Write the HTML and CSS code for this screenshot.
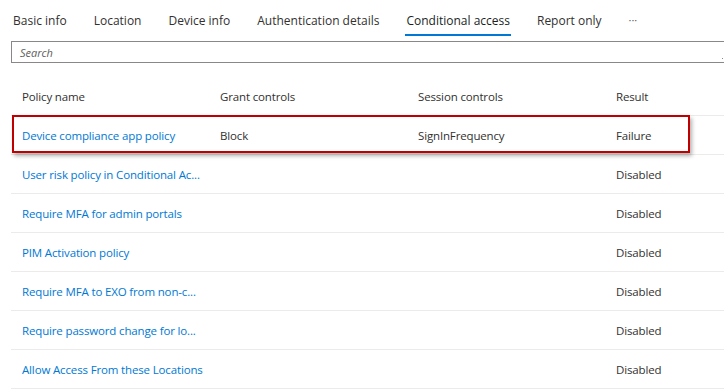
FILE: index.html
```html
<!DOCTYPE html>
<html lang="en">
<head>
<meta charset="utf-8">
<title>Conditional access</title>
<link rel="stylesheet" href="styles.css">
</head>
<body>
<div class="page">
  <nav class="tabs">
    <span class="tab">Basic info</span>
    <span class="tab">Location</span>
    <span class="tab">Device info</span>
    <span class="tab">Authentication details</span>
    <span class="tab active">Conditional access</span>
    <span class="tab">Report only</span>
    <span class="tab more">···</span>
  </nav>
  <div class="search"><span class="placeholder">Search</span><span class="grip"></span></div>
  <div class="table">
    <div class="row head">
      <div class="cell">Policy name</div>
      <div class="cell">Grant controls</div>
      <div class="cell">Session controls</div>
      <div class="cell">Result</div>
    </div>
    <div class="row">
      <div class="cell link">Device compliance app policy</div>
      <div class="cell">Block</div>
      <div class="cell">SignInFrequency</div>
      <div class="cell">Failure</div>
    </div>
    <div class="row">
      <div class="cell link">User risk policy in Conditional Ac...</div>
      <div class="cell"></div>
      <div class="cell"></div>
      <div class="cell">Disabled</div>
    </div>
    <div class="row">
      <div class="cell link">Require MFA for admin portals</div>
      <div class="cell"></div>
      <div class="cell"></div>
      <div class="cell">Disabled</div>
    </div>
    <div class="row">
      <div class="cell link">PIM Activation policy</div>
      <div class="cell"></div>
      <div class="cell"></div>
      <div class="cell">Disabled</div>
    </div>
    <div class="row">
      <div class="cell link">Require MFA to EXO from non-c...</div>
      <div class="cell"></div>
      <div class="cell"></div>
      <div class="cell">Disabled</div>
    </div>
    <div class="row">
      <div class="cell link">Require password change for lo...</div>
      <div class="cell"></div>
      <div class="cell"></div>
      <div class="cell">Disabled</div>
    </div>
    <div class="row">
      <div class="cell link">Allow Access From these Locations</div>
      <div class="cell"></div>
      <div class="cell"></div>
      <div class="cell">Disabled</div>
    </div>
    <div class="highlight"></div>
  </div>
</div>
</body>
</html>
```

FILE: styles.css
```css
html, body {
  margin: 0;
  padding: 0;
  background: #ffffff;
  overflow: hidden;
}
.page {
  width: 724px;
  height: 390px;
  overflow: hidden;
  font-family: "Open Sans", "Noto Sans", sans-serif;
  color: #323130;
}
.tabs {
  display: flex;
  align-items: flex-start;
  gap: 25px;
  padding-left: 12px;
  height: 41px;
  box-sizing: border-box;
}
.tab {
  font-size: 12px;
  line-height: 18px;
  padding: 12px 1px 4px;
  border-bottom: 2px solid transparent;
  color: #323130;
  white-space: nowrap;
}
.tab.active {
  border-bottom-color: #0078d4;
  color: #201f1e;
}
.tab.more {
  color: #605e5c;
  font-size: 11px;
  padding-top: 11px;
}
.search {
  position: relative;
  margin-left: 11px;
  margin-right: -10px;
  height: 22px;
  box-sizing: border-box;
  border: 1px solid #8a8886;
  display: flex;
  align-items: center;
  padding-left: 8px;
}
.placeholder {
  font-style: italic;
  font-size: 11px;
  color: #605e5c;
}
.grip {
  position: absolute;
  right: 10px;
  bottom: 3px;
  width: 1px;
  height: 1px;
  background: #8a8886;
}
.table {
  position: relative;
  margin-top: 14px;
  margin-left: 11px;
  width: 713px;
}
.row {
  display: grid;
  grid-template-columns: 198px 198px 198px 1fr;
  height: 39px;
  box-sizing: border-box;
  border-bottom: 1px solid #edebe9;
  align-items: center;
}
.cell {
  padding-left: 11px;
  font-size: 11.5px;
  letter-spacing: -0.15px;
  line-height: 16px;
  padding-top: 1px;
  white-space: nowrap;
  color: #323130;
}
.head .cell {
  color: #323130;
}
.cell.link {
  color: #0078d4;
}
.highlight {
  position: absolute;
  left: 1px;
  top: 38px;
  width: 678px;
  height: 38px;
  box-sizing: border-box;
  border: 2px solid #c00000;
  box-shadow: 2px 3px 4px rgba(0, 0, 0, 0.3);
  pointer-events: none;
}
```
